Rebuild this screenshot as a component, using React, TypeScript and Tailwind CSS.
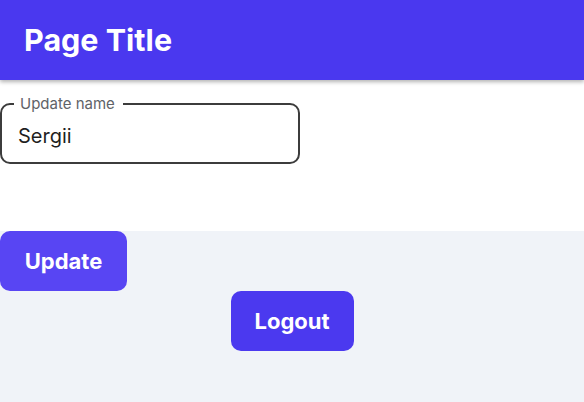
import { useState } from 'react';

export default function App() {
  const [name, setName] = useState('Sergii');

  return (
    <div className="min-h-[402px] bg-white font-['Inter',sans-serif]">
      <header className="relative z-10 flex h-20 items-center bg-[#4a38ef] px-6 shadow-[0_2px_4px_rgba(0,0,0,0.3)]">
        <h1 className="text-[30.5px] font-bold text-white">Page Title</h1>
      </header>

      <div className="pt-4 pb-[67px]">
        <fieldset className="w-[300px] rounded-[10px] border-2 border-[#3c3c3c] pr-3 pb-[6px] pl-3">
          <legend className="pr-2 pl-[6px] text-[15px] leading-4 text-[#5f6368]">Update name</legend>
          <input
            value={name}
            onChange={(e) => setName(e.target.value)}
            className="h-[44px] w-full bg-transparent px-1 pt-[4px] text-[20px] text-[#1f1f1f] outline-none"
          />
        </fieldset>
      </div>

      <div className="flex flex-col bg-[#f0f3f8] pb-[51px]">
        <button className="h-[60px] w-[127px] rounded-[10px] bg-[#5845f3] text-[22px] font-bold text-white">
          Update
        </button>
        <button className="mx-auto h-[60px] w-[123px] rounded-[10px] bg-[#4b39ef] text-[22px] font-bold text-white">
          Logout
        </button>
      </div>
    </div>
  );
}
